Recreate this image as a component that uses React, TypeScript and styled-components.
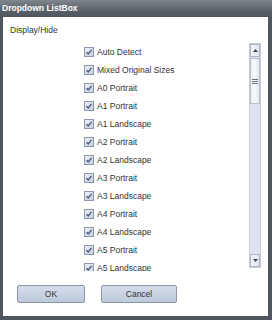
import React from "react";
import styled, { createGlobalStyle } from "styled-components";

const Global = createGlobalStyle`
  html, body { margin: 0; padding: 0; background: #ffffff; }
  * { box-sizing: border-box; }
`;

const Window = styled.div`
  width: 272px;
  height: 320px;
  display: flex;
  flex-direction: column;
  font-family: "Liberation Sans", Arial, sans-serif;
`;

const TitleBar = styled.div`
  height: 17px;
  flex: 0 0 17px;
  background: linear-gradient(#80868e 0%, #6a7078 35%, #575d65 70%, #50565e 100%);
  color: #ffffff;
  font-weight: bold;
  font-size: 8.5px;
  line-height: 17px;
  padding-left: 2px;
  white-space: nowrap;
`;

const Body = styled.div`
  flex: 1;
  background: #ffffff;
  border-left: 3px solid #50565d;
  border-right: 4px solid #50565d;
  border-bottom: 4px solid #50565d;
  padding: 8px 7px 0 7px;
  display: flex;
  flex-direction: column;
`;

const Heading = styled.div`
  height: 10px;
  line-height: 10px;
  font-size: 8.5px;
  color: #333333;
`;

const ListBox = styled.div`
  margin-top: 8px;
  margin-left: 74px;
  height: 228px;
  display: flex;
  align-items: flex-start;
`;

const Items = styled.div`
  flex: 1;
  height: 228px;
  overflow: hidden;
  display: flex;
  flex-direction: column;
`;

const Row = styled.div`
  height: 18px;
  flex: 0 0 18px;
  display: flex;
  align-items: center;
  gap: 3px;
  font-size: 8.5px;
  color: #333333;
  white-space: nowrap;
`;

const Scrollbar = styled.div`
  width: 12px;
  height: 225px;
  border: 1px solid #c9cdd6;
  background: #dfe3f1;
  display: flex;
  flex-direction: column;
`;

const ArrowButton = styled.div`
  height: 13px;
  flex: 0 0 13px;
  background: linear-gradient(90deg, #f3f5f9, #e2e6ee);
  border: 1px solid #aeb4c0;
  display: flex;
  align-items: center;
  justify-content: center;
`;

const Thumb = styled.div`
  height: 46px;
  flex: 0 0 46px;
  margin-top: 1px;
  background: linear-gradient(90deg, #eef0f5 0%, #f8f9fb 45%, #e3e7ef 100%);
  border: 1px solid #b8beca;
  display: flex;
  flex-direction: column;
  align-items: center;
  justify-content: center;
  gap: 1px;
`;

const Grip = styled.div`
  width: 6px;
  height: 1px;
  background: #6d7585;
`;

const Track = styled.div`
  flex: 1;
`;

const ButtonRow = styled.div`
  margin-top: 14px;
  margin-left: 7px;
  display: flex;
  gap: 16px;
`;

const Button = styled.div<{ $w: number }>`
  width: ${(p) => p.$w}px;
  height: 18px;
  border: 1px solid #8c95a4;
  border-radius: 2px;
  background: linear-gradient(#d6deeb, #bcc8db);
  color: #333333;
  font-size: 8.5px;
  display: flex;
  align-items: center;
  justify-content: center;
`;

const Check = () => (
  <svg width="10" height="10" viewBox="0 0 10 10">
    <defs>
      <linearGradient id="cb" x1="0" y1="0" x2="1" y2="1">
        <stop offset="0" stopColor="#eef1f7" />
        <stop offset="1" stopColor="#c5cfe0" />
      </linearGradient>
    </defs>
    <rect x="0.5" y="0.5" width="9" height="9" fill="url(#cb)" stroke="#8a96ab" />
    <path d="M2.5 5.2 L4.2 7 L7.6 2.8" fill="none" stroke="#44567a" strokeWidth="1.3" />
  </svg>
);

const items = [
  "Auto Detect",
  "Mixed Original Sizes",
  "A0 Portrait",
  "A1 Portrait",
  "A1 Landscape",
  "A2 Portrait",
  "A2 Landscape",
  "A3 Portrait",
  "A3 Landscape",
  "A4 Portrait",
  "A4 Landscape",
  "A5 Portrait",
  "A5 Landscape",
  "A6 Portrait",
];

export default function App() {
  return (
    <>
      <Global />
      <Window>
        <TitleBar>Dropdown ListBox</TitleBar>
        <Body>
          <Heading>Display/Hide</Heading>
          <ListBox>
            <Items>
              {items.map((t) => (
                <Row key={t}>
                  <Check />
                  <span>{t}</span>
                </Row>
              ))}
            </Items>
            <Scrollbar>
              <ArrowButton>
                <svg width="5" height="3" viewBox="0 0 5 3">
                  <path d="M0 3 L2.5 0 L5 3 Z" fill="#3c4454" />
                </svg>
              </ArrowButton>
              <Thumb>
                <Grip />
                <Grip />
                <Grip />
              </Thumb>
              <Track />
              <ArrowButton>
                <svg width="5" height="3" viewBox="0 0 5 3">
                  <path d="M0 0 L2.5 3 L5 0 Z" fill="#3c4454" />
                </svg>
              </ArrowButton>
            </Scrollbar>
          </ListBox>
          <ButtonRow>
            <Button $w={68}>OK</Button>
            <Button $w={76}>Cancel</Button>
          </ButtonRow>
        </Body>
      </Window>
    </>
  );
}
